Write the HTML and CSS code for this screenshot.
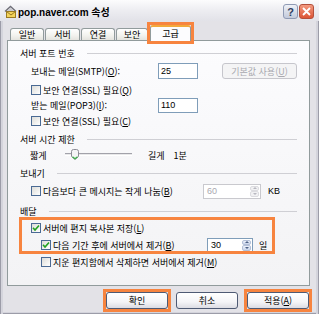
FILE: index.html
```html
<!DOCTYPE html>
<html lang="ko">
<head>
  <meta charset="UTF-8" />
  <title>pop.naver.com 속성</title>
  <link rel="stylesheet" href="styles.css">
</head>
<body>

<div class="window">
  <div class="titlebar">
    <svg class="app-icon" width="13" height="13" viewBox="0 0 13 13">
      <path d="M1 6.5 L6.5 1.5 L12 6.5" fill="none" stroke="#6f6f78" stroke-width="1.4"/>
      <path d="M3 6 L6.5 3 L10 6 L10 8 L3 8 Z" fill="#c9c9d0"/>
      <rect x="2.5" y="6.5" width="9" height="6" fill="#f4d35a" stroke="#9a7a22"/>
      <path d="M2.5 6.5 L7 10 L11.5 6.5" fill="none" stroke="#9a7a22"/>
    </svg>
    <span class="title">pop.naver.com 속성</span>
    <div class="caption-btns">
      <span class="cap-btn help">?</span>
      <span class="cap-btn close">
        <svg width="9" height="9" viewBox="0 0 9 9">
          <path d="M1 1 L8 8 M8 1 L1 8" stroke="#fff" stroke-width="1.8"/>
        </svg>
      </span>
    </div>
  </div>

  <div class="tabs">
    <span class="tab t1">일반</span>
    <span class="tab t2">서버</span>
    <span class="tab t3">연결</span>
    <span class="tab t4">보안</span>
    <span class="tab on mark">고급</span>
  </div>

  <div class="panel">
    <div class="group g1"><span>서버 포트 번호</span></div>

    <div class="row r-smtp">
      <span class="label">보내는 메일(SMTP)(<u>O</u>):</span>
      <span class="field">25</span>
      <span class="btn dis">기본값 사용(<u>U</u>)</span>
    </div>

    <div class="row r-ssl1">
      <span class="check"></span>
      <span>보안 연결(SSL) 필요(<u>Q</u>)</span>
    </div>

    <div class="row r-pop">
      <span class="label">받는 메일(POP3)(<u>I</u>):</span>
      <span class="field short">110</span>
    </div>

    <div class="row r-ssl2">
      <span class="check"></span>
      <span>보안 연결(SSL) 필요(<u>C</u>)</span>
    </div>

    <div class="group g2"><span>서버 시간 제한</span></div>

    <div class="row r-slider">
      <span class="short-lbl">짧게</span>
      <span class="slider">
        <span class="track"></span>
        <svg class="thumb" width="8" height="11" viewBox="0 0 8 11">
          <path d="M0.5 2.5 Q0.5 0.5 2.5 0.5 L5.5 0.5 Q7.5 0.5 7.5 2.5 L7.5 7.5 L4 10.5 L0.5 7.5 Z" fill="#f4f4f6" stroke="#8c8c96"/>
          <path d="M1.5 7.8 L4 9.8 L6.5 7.8" fill="none" stroke="#3cb149" stroke-width="1.2"/>
        </svg>
      </span>
      <span class="long-lbl">길게</span>
      <span class="minute">1분</span>
    </div>

    <div class="group g3"><span>보내기</span></div>

    <div class="row r-big">
      <span class="check"></span>
      <span class="big-lbl">다음보다 큰 메시지는 작게 나눔(<u>B</u>)</span>
      <span class="spin dis wide">
        <span class="val">60</span>
        <span class="arrows"><span class="up"></span><span class="down"></span></span>
      </span>
      <span class="unit">KB</span>
    </div>

    <div class="group g4"><span>배달</span></div>

    <div class="keep">
      <div class="row r-keep">
        <span class="check on">
          <svg width="8" height="8" viewBox="0 0 8 8"><path d="M1 3.8 L3 6 L7 1.5" fill="none" stroke="#21a121" stroke-width="1.6"/></svg>
        </span>
        <span>서버에 편지 복사본 저장(<u>L</u>)</span>
      </div>
      <div class="row r-remove">
        <span class="check on">
          <svg width="8" height="8" viewBox="0 0 8 8"><path d="M1 3.8 L3 6 L7 1.5" fill="none" stroke="#21a121" stroke-width="1.6"/></svg>
        </span>
        <span class="remove-lbl">다음 기간 후에 서버에서 제거(<u>B</u>)</span>
        <span class="spin">
          <span class="val">30</span>
          <span class="arrows"><span class="up"></span><span class="down"></span></span>
        </span>
        <span class="unit day">일</span>
      </div>
    </div>

    <div class="row r-deleted">
      <span class="check"></span>
      <span>지운 편지함에서 삭제하면 서버에서 제거(<u>M</u>)</span>
    </div>
  </div>

  <div class="actions">
    <span class="btn ok mark">확인</span>
    <span class="btn cancel">취소</span>
    <span class="btn apply mark">적용(<u>A</u>)</span>
  </div>
</div>

</body>
</html>
```

FILE: styles.css
```css
* {
  box-sizing: border-box;
}

body {
  margin: 0;
  font-family: "Noto Sans CJK KR", sans-serif;
  font-size: 9px;
  color: #000;
}

u {
  text-decoration: underline;
}

.window {
  width: 319px;
  height: 314px;
  overflow: hidden;
  background: #e3e2e7;
  box-shadow: inset 1px 0 #9c9ca8, inset 3px 0 #d4d4dc,
              inset -1px 0 #9c9ca8, inset -3px 0 #d4d4dc,
              inset 0 -1px #9c9ca8, inset 0 -2px #d4d4dc;
}

/* title bar */
.titlebar {
  display: flex;
  align-items: center;
  height: 21px;
  padding: 2px 0 0 4px;
  background: linear-gradient(#fcfcfd, #ededf1 50%, #e2e2e8);
}

.app-icon {
  margin-right: 1px;
}

.title {
  font-family: "Liberation Sans", "Noto Sans CJK KR", sans-serif;
  font-weight: bold;
  font-size: 10px;
}

.caption-btns {
  display: flex;
  gap: 1px;
  margin-left: auto;
  margin-right: 5px;
}

.cap-btn {
  display: flex;
  align-items: center;
  justify-content: center;
  width: 15px;
  height: 15px;
  border-radius: 3px;
}

.help {
  border: 1px solid #8f9ab4;
  background: linear-gradient(#eef1f7, #c3cadb);
  color: #2f3c5e;
  font-family: "Liberation Sans", sans-serif;
  font-weight: bold;
  font-size: 11px;
}

.close {
  border: 1px solid #b4503c;
  background: linear-gradient(#f39a80, #dc5535);
}

/* tabs */
.tabs {
  display: flex;
  align-items: flex-end;
  height: 16px;
  margin-top: 4px;
  padding-left: 10px;
}

.tab {
  display: flex;
  align-items: center;
  justify-content: center;
  height: 12px;
  margin-bottom: 1px;
  border: 1px solid #919b9c;
  border-bottom: none;
  border-radius: 3px 3px 0 0;
  background: linear-gradient(#ffffff, #f2f2ee 60%, #e4e3de);
}

.t1 { width: 34px; }
.t2 { width: 35px; margin-left: 1px; }
.t3 { width: 34px; margin-left: 1px; }
.t4 { width: 32px; margin-left: 1px; }

.tab.on {
  position: relative;
  width: 41px;
  height: 16px;
  margin-left: 2px;
  margin-bottom: 0;
  border-top: 2px solid #f2a93b;
  background: #fcfcfe;
  padding-bottom: 1px;
}

/* orange annotation frames */
.mark {
  position: relative;
}

.mark::after {
  content: "";
  position: absolute;
  inset: -3px;
  border: 3px solid #f7843f;
}

.tab.mark::after {
  top: -5px;
  left: -4px;
  right: -4px;
}

.actions .mark::after {
  inset: -4px;
}

/* panel */
.panel {
  height: 246px;
  margin: -1px 9px 0 7px;
  border: 1px solid #919b9c;
  background: linear-gradient(#fcfcfe, #f3f3f5);
}

.group {
  display: flex;
  align-items: center;
  gap: 12px;
  height: 14px;
  margin: 4px 12px 0 12px;
}

.group::after {
  content: "";
  flex: 1;
  border-top: 1px solid #cfcfd4;
}

.g1 { margin-top: 5px; }
.g4 { margin-top: 6px; }

.row {
  display: flex;
  align-items: center;
  height: 14px;
  margin-left: 23px;
}

.r-smtp { margin-top: 4px; }
.r-ssl1 { margin-top: 5px; }
.r-pop { margin-top: 1px; }
.r-ssl2 { margin-top: 2px; }
.r-slider { margin-top: 2px; margin-left: 22px; }
.r-big { margin-top: 4px; }
.r-deleted { margin-top: 4px; margin-left: 33px; }

.label {
  width: 127px;
}

.field {
  width: 40px;
  height: 16px;
  padding: 0 2px;
  border: 1px solid #7f9db9;
  background: #fff;
  font-family: "Liberation Sans", sans-serif;
  font-size: 9px;
  line-height: 14px;
}

.field.short {
  height: 15px;
  line-height: 13px;
}

.btn {
  display: flex;
  align-items: center;
  justify-content: center;
  border: 1px solid #4e5a74;
  border-radius: 3px;
  background: linear-gradient(#ffffff, #f4f4f7 60%, #dcdce3);
}

.btn.dis {
  width: 75px;
  height: 16px;
  margin-left: 24px;
  border-color: #c6c6cc;
  background: #f4f4f5;
  color: #a9a9b0;
}

.check {
  display: flex;
  align-items: center;
  justify-content: center;
  width: 10px;
  height: 10px;
  margin-right: 2px;
  border: 1px solid #4a6a94;
  background: linear-gradient(135deg, #dcdcd8, #ffffff);
}

/* slider */
.short-lbl {
  width: 18px;
}

.slider {
  position: relative;
  width: 67px;
  height: 12px;
  margin-left: 17px;
}

.track {
  display: block;
  height: 3px;
  margin-top: 4px;
  border-top: 1px solid #a2a2aa;
  border-bottom: 1px solid #fff;
  background: #e8e8ea;
}

.thumb {
  position: absolute;
  left: 6px;
  top: 0;
}

.long-lbl {
  margin-left: 16px;
}

.minute {
  margin-left: 9px;
}

/* spin boxes */
.big-lbl {
  width: 160px;
}

.remove-lbl {
  width: 154px;
}

.spin {
  display: flex;
  width: 46px;
  height: 15px;
  padding: 1px;
  border: 1px solid #7f9db9;
  background: #fff;
  font-family: "Liberation Sans", sans-serif;
}

.spin.wide {
  width: 58px;
}

.spin .val {
  flex: 1;
  padding-left: 2px;
  line-height: 11px;
}

.arrows {
  display: flex;
  flex-direction: column;
  width: 9px;
}

.arrows span {
  flex: 1;
  display: flex;
  align-items: center;
  justify-content: center;
  border: 1px solid #b4c0d8;
  border-radius: 2px;
  background: linear-gradient(#eef2fb, #c9d4ea);
}

.arrows span::after {
  content: "";
  border-left: 2px solid transparent;
  border-right: 2px solid transparent;
}

.arrows .up::after {
  border-bottom: 2px solid #4d6185;
}

.arrows .down::after {
  border-top: 2px solid #4d6185;
}

.spin.dis {
  border-color: #c9c9ce;
  color: #a9a9b0;
}

.spin.dis .arrows span {
  border-color: #dcdce0;
  background: #f1f1f3;
}

.spin.dis .arrows .up::after {
  border-bottom-color: #b8b8c0;
}

.spin.dis .arrows .down::after {
  border-top-color: #b8b8c0;
}

.unit {
  margin-left: 7px;
  font-family: "Liberation Sans", "Noto Sans CJK KR", sans-serif;
}

.unit.day {
  margin-left: 6px;
}

/* delivery box */
.keep {
  width: 250px;
  height: 31px;
  margin: 2px 0 0 14px;
  padding-top: 1px;
  outline: 3px solid #f7843f;
}

.keep .row {
  margin-left: 9px;
}

.keep .r-remove {
  margin-top: 3px;
  margin-left: 19px;
}

/* bottom buttons */
.actions {
  display: flex;
  margin-top: 6px;
  padding-left: 106px;
}

.actions .btn {
  width: 62px;
  height: 17px;
}

.cancel {
  margin-left: 8px;
}

.apply {
  margin-left: 9px;
}
```
